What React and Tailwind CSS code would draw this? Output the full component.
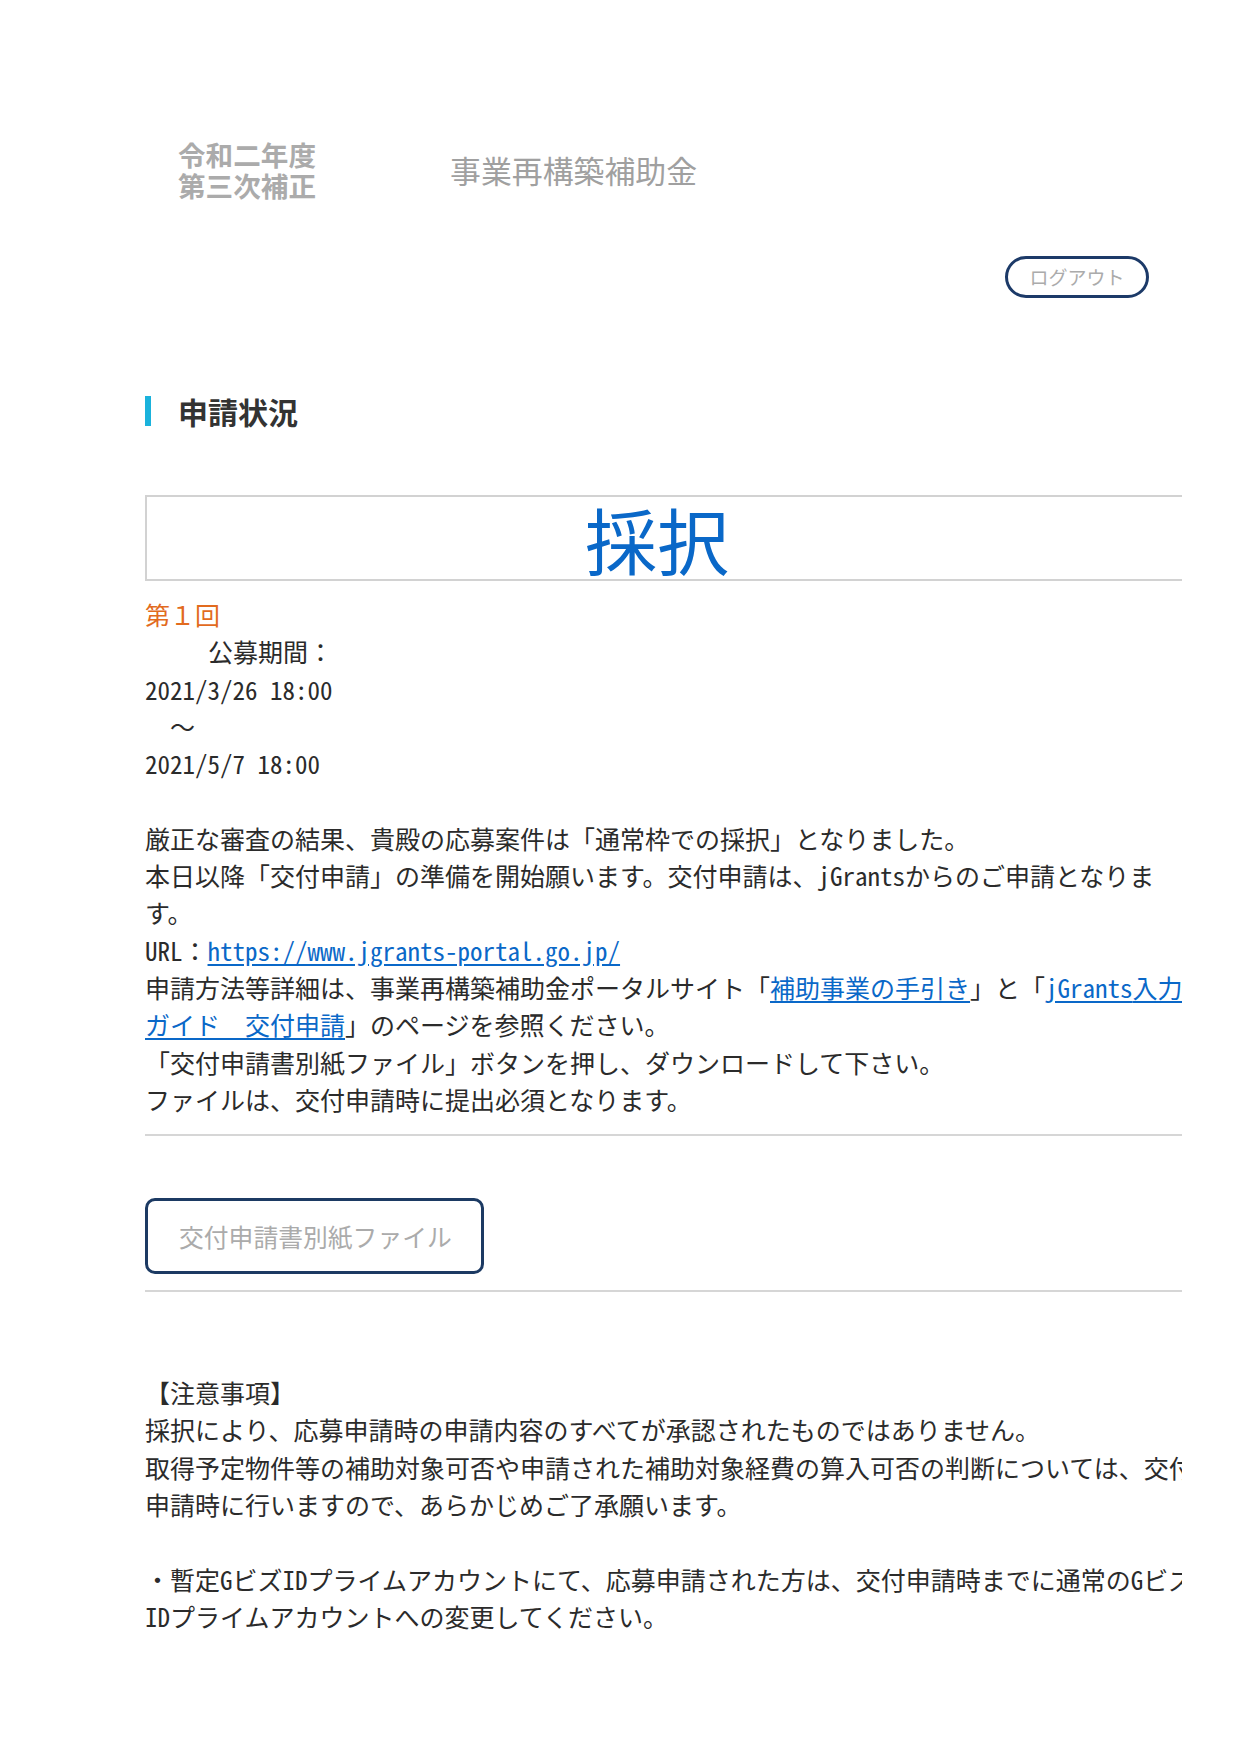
const H = ({ children }) => <span className="[font-feature-settings:'hwid']">{children}</span>;

const Link = ({ children }) => (
  <a href="#" className="text-[#0a68c8] underline underline-offset-[3px]">
    {children}
  </a>
);

export default function App() {
  return (
    <div className="w-[1240px] min-h-[1754px] bg-white font-['Noto_Sans_CJK_JP',sans-serif] [text-spacing-trim:space-all] text-[#2b2b2b]">
      {/* Header */}
      <header className="pt-[139px] pl-[178px] flex items-center">
        <div className="text-[27.6px] leading-[31px] font-bold text-[#ababab]">
          <p>令和二年度</p>
          <p>第三次補正</p>
        </div>
        <div className="ml-[134px] text-[30.9px] text-[#a0a0a0]">事業再構築補助金</div>
      </header>

      <div className="flex justify-end pr-[91px] mt-[55px]">
        <button className="h-[42px] w-[144px] rounded-full border-[3px] border-[#1c3a68] text-[19px] text-[#ababab] bg-white">
          ログアウト
        </button>
      </div>

      <main className="ml-[145px] w-[1037px] overflow-hidden">
        {/* Section title */}
        <h2 className="mt-[98px] flex items-center h-[30px]">
          <span className="w-[6px] h-[30px] bg-[#1ab2dc]"></span>
          <span className="ml-[27px] text-[30px] font-bold text-[#333]">申請状況</span>
        </h2>

        <div className="w-[1070px]">
          {/* Status box */}
          <div className="mt-[69px] h-[86px] border-2 border-[#d2d2d2] flex items-center pl-[438px]">
            <span className="text-[72px] leading-none text-[#0a68c8]">採択</span>
          </div>

          <div className="mt-[15px] w-[1045px] text-[25px] leading-[37.3px]">
            <p className="text-[#e26b1e]">第１回</p>
            <p className="pl-[63px]">公募期間：</p>
            <p><H>2021/3/26 18:00</H></p>
            <p className="pl-[25px]">～</p>
            <p><H>2021/5/7 18:00</H></p>
            <div className="h-[37.3px]"></div>
            <p>厳正な審査の結果、貴殿の応募案件は「通常枠での採択」となりました。</p>
            <p>本日以降「交付申請」の準備を開始願います。交付申請は、<H>jGrants</H>からのご申請となります。</p>
            <p>
              <H>URL</H>：<Link><H>https://www.jgrants-portal.go.jp/</H></Link>
            </p>
            <p>
              申請方法等詳細は、事業再構築補助金ポータルサイト「<Link>補助事業の手引き</Link>」と「<Link><H>jGrants</H>入力ガイド　交付申請</Link>」のページを参照ください。
            </p>
            <p>「交付申請書別紙ファイル」ボタンを押し、ダウンロードして下さい。</p>
            <p>ファイルは、交付申請時に提出必須となります。</p>
          </div>

          <hr className="mt-[16px] border-0 border-t-2 border-[#d6d6d6]" />

          <button className="mt-[62px] h-[76px] w-[339px] rounded-[10px] border-[3px] border-[#1c3a63] text-left pl-[31px] text-[24.8px] text-[#ababab] bg-white">
            交付申請書別紙ファイル
          </button>

          <hr className="mt-[16px] border-0 border-t-2 border-[#d6d6d6]" />

          <div className="mt-[82px] w-[1060px] text-[25px] leading-[37.3px] pb-[100px]">
            <p>【注意事項】</p>
            <p>採択により、応募申請時の申請内容のすべてが承認されたものではありません。</p>
            <p>取得予定物件等の補助対象可否や申請された補助対象経費の算入可否の判断については、交付申請時に行いますので、あらかじめご了承願います。</p>
            <div className="h-[37.3px]"></div>
            <p>・暫定<H>G</H>ビズ<H>ID</H>プライムアカウントにて、応募申請された方は、交付申請時までに通常の<H>G</H>ビズ<H>ID</H>プライムアカウントへの変更してください。</p>
          </div>
        </div>
      </main>
    </div>
  );
}
